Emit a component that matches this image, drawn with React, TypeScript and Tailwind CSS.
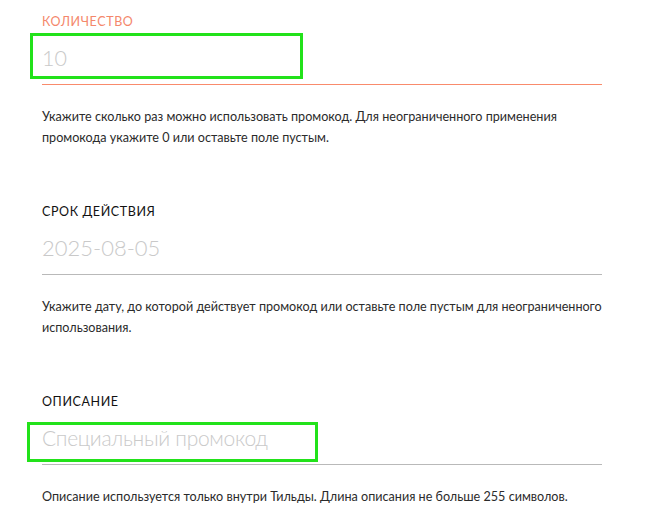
import React from "react";

const Section = ({
  label,
  labelClass,
  value,
  valueClass,
  lineClass,
  help,
  first,
}: {
  label: string;
  labelClass: string;
  value: string;
  valueClass: string;
  lineClass: string;
  help: React.ReactNode;
  first?: boolean;
}) => (
  <div className={first ? "pt-[13px]" : "pt-[55px]"}>
    <div className={`text-[12.5px] leading-[17px] tracking-[0.6px] ${labelClass}`}>{label}</div>
    <div className={`pt-[14px] pb-[12px] border-b ${lineClass}`}>
      <div className={`leading-[28px] font-light text-[#c9c9c9] ${valueClass}`}>{value}</div>
    </div>
    <div className="mt-[21px] text-[12.6px] leading-[21px] text-[#2b2b2b]">{help}</div>
  </div>
);

export default function App() {
  return (
    <div
      className="relative w-[663px] h-[522px] bg-white overflow-hidden"
      style={{ fontFamily: "Lato, 'Noto Sans', sans-serif" }}
    >
      <div className="pl-[42px] w-[602px]">
        <Section
          first
          label="КОЛИЧЕСТВО"
          labelClass="text-[#f4876b]"
          value="10"
          valueClass="text-[21.5px]"
          lineClass="border-[#f98b6c]"
          help={
            <>
              Укажите сколько раз можно использовать промокод. Для неограниченного применения
              <br />
              промокода укажите 0 или оставьте поле пустым.
            </>
          }
        />
        <Section
          label="СРОК ДЕЙСТВИЯ"
          labelClass="text-[#111]"
          value="2025-08-05"
          valueClass="text-[22px]"
          lineClass="border-[#b9b9b9]"
          help={
            <>
              Укажите дату, до которой действует промокод или оставьте поле пустым для неограниченного
              <br />
              использования.
            </>
          }
        />
        <Section
          label="ОПИСАНИЕ"
          labelClass="text-[#111]"
          value="Специальный промокод"
          valueClass="text-[21px] tracking-[-0.3px]"
          lineClass="border-[#b9b9b9]"
          help={<>Описание используется только внутри Тильды. Длина описания не больше 255 символов.</>}
        />
      </div>
      <div className="absolute left-[30px] top-[33px] w-[273px] h-[46px] border-[3px] border-[#22e21a]" />
      <div className="absolute left-[27px] top-[422px] w-[291px] h-[40px] border-[3px] border-[#22e21a]" />
    </div>
  );
}
